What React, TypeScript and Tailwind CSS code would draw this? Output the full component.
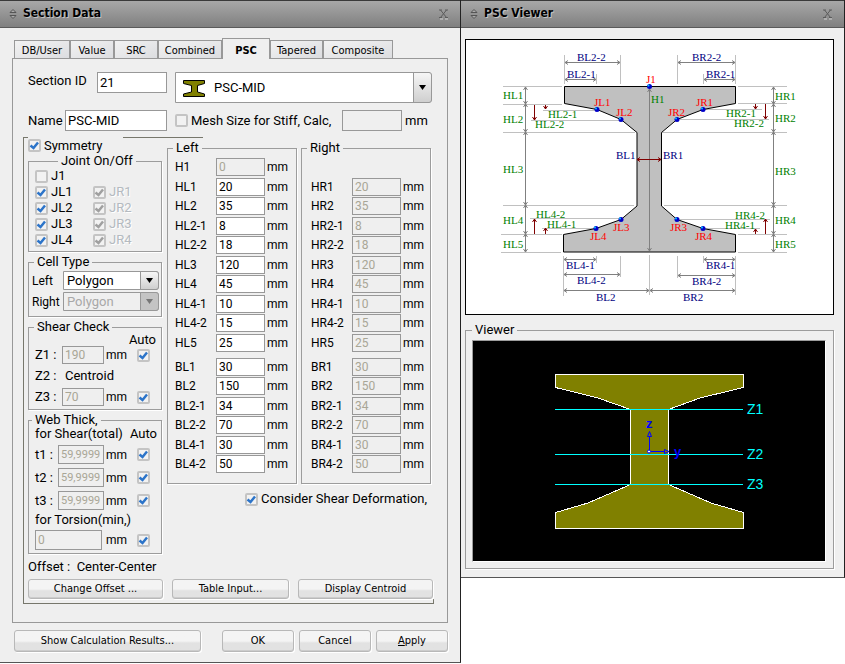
import React from 'react';

const SANS = 'font-[Roboto,sans-serif]';
const UI = "font-['DejaVu_Sans_Condensed','DejaVu_Sans',sans-serif]";

const tabs = [
  { name: 'DB/User', width: 'w-14' },
  { name: 'Value', width: 'w-11' },
  { name: 'SRC', width: 'w-11' },
  { name: 'Combined', width: 'w-16' },
  { name: 'PSC', width: 'w-12', active: true },
  { name: 'Tapered', width: 'w-[53px]' },
  { name: 'Composite', width: 'w-[70px]' },
];

const heights = [
  ['HL1', '20'],
  ['HL2', '35'],
  ['HL2-1', '8'],
  ['HL2-2', '18'],
  ['HL3', '120'],
  ['HL4', '45'],
  ['HL4-1', '10'],
  ['HL4-2', '15'],
  ['HL5', '25'],
];

const widths = [
  ['BL1', '30'],
  ['BL2', '150'],
  ['BL2-1', '34'],
  ['BL2-2', '70'],
  ['BL4-1', '30'],
  ['BL4-2', '50'],
];

const TitleBar: React.FC<{ title: string }> = ({ title }) => (
  <header className="flex h-7 items-center border-t border-b border-t-[#3a3a3a] border-b-[#5a5a5a] bg-linear-to-b from-[#a8a8a8] to-[#808080] pr-[10px] pl-2">
    <svg className="h-3 w-3" viewBox="0 0 12 12" fill="none" stroke="#555">
      <path d="M2 4.500 L5 1.500 L8 4.500 Z M2 7.500 L5 10.500 L8 7.500 Z" fill="#aaa" />
    </svg>
    <h1 className={`ml-[3px] flex-1 pb-[2px] text-[12px] leading-4 font-bold text-black [text-shadow:1px_1px_0_#c4c4c4] ${UI}`}>{title}</h1>
    <button aria-label={`Close ${title}`} className="h-3 w-3">
      <svg className="h-3 w-3" viewBox="0 0 12 12" fill="none">
        <path d="M2 11 H5 M7 11 H10" stroke="#d0d0d0" />
        <path d="M1 2 H4 M7 2 H10 M2.500 2 L8.500 9.500 M8.500 2 L2.500 9.500 M1 9.500 H4 M7 9.500 H10" stroke="#5c5c5c" />
      </svg>
    </button>
  </header>
);

interface CheckProps {
  id: string;
  label?: string;
  hint?: string;
  checked?: boolean;
  disabled?: boolean;
}

const Check: React.FC<CheckProps> = ({ id, label, hint, checked, disabled }) => (
  <span className="flex items-center gap-[3px]">
    <span className="relative h-[13px] w-[13px] shrink-0">
      <input
        id={id}
        type="checkbox"
        aria-label={label ? undefined : hint}
        defaultChecked={checked}
        disabled={disabled}
        className="peer block h-[13px] w-[13px] appearance-none rounded-[2px] border-2 border-[#c4c4c4] bg-[#f2f2f2]"
      />
      <svg
        className="pointer-events-none absolute inset-0 hidden h-[13px] w-[13px] text-[#2c74c9] peer-checked:block peer-disabled:text-[#a0a0a0]"
        viewBox="0 0 13 13"
        fill="none"
        stroke="currentColor"
        strokeWidth="2.500"
      >
        <path d="M2.500 6.500 L5.500 9 L10 3.500" />
      </svg>
    </span>
    {label && (
      <label htmlFor={id} className={`whitespace-nowrap ${disabled ? 'text-[#b4bac0] [text-shadow:1px_1px_0_#fff]' : ''}`}>
        {label}
      </label>
    )}
  </span>
);

interface FieldProps {
  id: string;
  value?: string;
  disabled?: boolean;
  className?: string;
}

const Field: React.FC<FieldProps> = ({ id, value = '', disabled, className = '' }) => (
  <input
    id={id}
    type="text"
    defaultValue={value}
    disabled={disabled}
    className={`min-w-0 border border-[#989898] bg-white px-[2px] text-black disabled:bg-[#efefef] disabled:text-[#a9a696] ${className}`}
  />
);

const Group: React.FC<{ title: string; legend?: string; className?: string; children: React.ReactNode }> = ({
  title,
  legend = 'ml-[5px]',
  className = '',
  children,
}) => (
  <fieldset className="min-w-0 border border-[#9c9c9c] shadow-[1px_1px_0_#fff]">
    <legend className={`h-[14px] px-[3px] leading-[14px] ${legend}`}>{title}</legend>
    <div className={className}>{children}</div>
  </fieldset>
);

const Arrow: React.FC<{ disabled?: boolean }> = ({ disabled }) => (
  <span
    className={`pointer-events-none absolute top-0 right-0 bottom-0 flex w-[19px] items-center justify-center rounded-r-[3px] border border-[#989898] ${
      disabled ? 'bg-[#c4c4c4]' : 'bg-linear-to-b from-[#f6f6f6] to-[#cfcfcf]'
    }`}
  >
    <svg className="h-[5px] w-[7px]" viewBox="0 0 7 5">
      <path d="M0 0 H7 L3.500 5 Z" fill={disabled ? '#777' : '#000'} />
    </svg>
  </span>
);

const CellSelect: React.FC<{ label: string; disabled?: boolean }> = ({ label, disabled }) => (
  <div className="flex items-center">
    <label htmlFor={`cell-${label}`} className="w-[31px] shrink-0 text-[12px] whitespace-nowrap">
      {label}
    </label>
    <div className="relative flex-1">
      <select
        id={`cell-${label}`}
        disabled={disabled}
        className="block h-[19px] w-full appearance-none rounded-r-[3px] border border-[#989898] bg-white px-[3px] leading-4 disabled:bg-[#efefef] disabled:text-[#a8a8a8] disabled:opacity-100"
      >
        <option>Polygon</option>
      </select>
      <Arrow disabled={disabled} />
    </div>
  </div>
);

const Dimension: React.FC<{ name: string; value: string; disabled?: boolean }> = ({ name, value, disabled }) => (
  <div className="flex h-[18px] items-center text-[12px]">
    <label htmlFor={name} className="w-[41px] shrink-0 whitespace-nowrap">
      {name}
    </label>
    <Field id={name} value={value} disabled={disabled} className="h-[18px] w-[49px]" />
    <span className="ml-[2px]">mm</span>
  </div>
);

const Dimensions: React.FC<{ side: 'L' | 'R' }> = ({ side }) => {
  const disabled = side === 'R';
  const rename = (name: string) => name.replace('L', side);
  return (
    <>
      <div className="*:even:mt-px *:odd:mt-[2px]">
        {heights.map(([name, value]) => (
          <Dimension key={name} name={rename(name)} value={value} disabled={disabled} />
        ))}
      </div>
      <div className="pt-1 *:even:mt-px *:odd:mt-[2px]">
        {widths.map(([name, value]) => (
          <Dimension key={name} name={rename(name)} value={value} disabled={disabled} />
        ))}
      </div>
    </>
  );
};

const AutoField: React.FC<{ name: string; value: string; className: string }> = ({ name, value, className }) => (
  <div className="flex items-center">
    <label htmlFor={name} className="flex-1 whitespace-nowrap">
      {name} :
    </label>
    <Field id={name} value={value} disabled className={className} />
    <span className="ml-[2px] w-[31px] text-[12px]">mm</span>
    <Check id={`${name}-auto`} hint={`${name} auto`} checked />
  </div>
);

const PushButton: React.FC<{ className?: string; children: React.ReactNode }> = ({ className = '', children }) => (
  <button
    className={`rounded-[3px] border border-[#b8b8b8] bg-linear-to-b from-[#f4f4f4] from-50% to-[#e2e2e2] to-60% text-center text-[11px] leading-4 whitespace-nowrap text-black shadow-[inset_0_-1px_0_#ccc,1px_1px_0_#fff] ${UI} ${className}`}
  >
    {children}
  </button>
);

// Line with an open arrow head at its end, or at both ends
const Dim: React.FC<{ x1: number; y1: number; x2: number; y2: number; color?: string; both?: boolean }> = ({
  x1,
  y1,
  x2,
  y2,
  color = '#808080',
  both = true,
}) => {
  const head = (x: number, y: number, fromX: number, fromY: number) => {
    const dx = Math.sign(fromX - x) * 3;
    const dy = Math.sign(fromY - y) * 3;
    return dx
      ? `M${x + dx} ${y - 2} L${x} ${y} L${x + dx} ${y + 2}`
      : `M${x - 2} ${y + dy} L${x} ${y} L${x + 2} ${y + dy}`;
  };
  return (
    <path
      d={`M${x1} ${y1} L${x2} ${y2} ${head(x2, y2, x1, y1)} ${both ? head(x1, y1, x2, y2) : ''}`}
      stroke={color}
      fill="none"
    />
  );
};

const guides = [
  'M503 86.500H562 M738 86.500H787 M503 104.500H562 M738 103.500H787',
  'M503 132.500H635 M662 132.500H787 M503 205.500H634 M664 205.500H787',
  'M501 234.500H562 M738 234.500H787 M501 252.500H561 M738 252.500H787',
  'M543 110.500H595 M531 120.500H619 M705 109.500H762 M680 119.500H769',
  'M530 218.500H619 M542 228.500H594 M680 219.500H770 M706 228.500H760',
  'M564.500 55V84 M620.500 55V84 M596.500 74V84 M677.500 55V84 M735.500 55V84 M703.500 74V84',
  'M563.500 256V296 M596.500 256V263 M620.500 256V277 M649.500 255V295 M677.500 256V278 M703.500 256V263 M735.500 256V295',
].join(' ');

const verticalStops = [87, 104, 132, 205, 234, 252];

const horizontalDims = [
  [565, 620, 62.5],
  [565, 596, 79.5],
  [678, 735, 62.5],
  [704, 735, 79.5],
  [564, 596, 259.5],
  [564, 620, 274.5],
  [564, 649, 290.5],
  [650, 735, 290.5],
  [678, 735, 275.5],
  [704, 735, 259.5],
];

const offsets = [
  [534.5, 105, 120],
  [545.5, 105, 109],
  [755.5, 104, 109],
  [765.5, 104, 119],
  [534.5, 234, 219],
  [545.5, 234, 228],
  [755.5, 234, 229],
  [765.5, 234, 219],
];

const joints = [
  [649.5, 86.5],
  [597, 109.5],
  [621, 119.5],
  [703, 109.5],
  [677, 119.5],
  [621, 219.5],
  [596, 228.5],
  [677, 219.5],
  [703, 228.5],
];

const blueLabels: [string, number, number][] = [
  ['BL2-2', 577, 61],
  ['BL2-1', 567, 78],
  ['BR2-2', 692, 61],
  ['BR2-1', 706, 78],
  ['BL1', 616, 159],
  ['BR1', 663, 159],
  ['BL4-1', 566, 269],
  ['BL4-2', 577, 284],
  ['BL2', 596, 301],
  ['BR2', 683, 301],
  ['BR4-2', 692, 285],
  ['BR4-1', 706, 269],
];

const greenLabels: [string, number, number][] = [
  ['H1', 651, 103],
  ['HL1', 503, 99],
  ['HL2', 503, 123],
  ['HL2-1', 548, 118],
  ['HL2-2', 535, 128],
  ['HL3', 503, 173],
  ['HL4-2', 536, 218],
  ['HL4-1', 547, 228],
  ['HL4', 503, 224],
  ['HL5', 503, 248],
  ['HR1', 775, 100],
  ['HR2', 775, 122],
  ['HR2-1', 726, 117],
  ['HR2-2', 734, 127],
  ['HR3', 775, 175],
  ['HR4-2', 735, 219],
  ['HR4-1', 725, 229],
  ['HR4', 775, 224],
  ['HR5', 775, 248],
];

const redLabels: [string, number, number][] = [
  ['J1', 646, 83],
  ['JL1', 594, 106],
  ['JL2', 616, 116],
  ['JR1', 696, 106],
  ['JR2', 668, 116],
  ['JL3', 613, 231],
  ['JL4', 590, 240],
  ['JR3', 670, 231],
  ['JR4', 695, 240],
];

const Labels: React.FC<{ items: [string, number, number][]; fill: string }> = ({ items, fill }) => (
  <g fill={fill}>
    {items.map(([text, x, y]) => (
      <text key={text} x={x} y={y}>
        {text}
      </text>
    ))}
  </g>
);

const SectionDiagram: React.FC = () => (
  <svg className="block w-full font-['Liberation_Serif',serif] text-[11px]" viewBox="466 40 367 274">
    <path d={guides} stroke="#c0c0c0" />
    <path
      d="M564.500 86.500 H735.500 V103.500 L703 109.500 L677 119.500 L661.500 132.500 V206 L677 219.500 L703 228.500 L735.500 234.500 V252 H563.500 V234.500 L596 228.500 L621 219.500 L637 206 V132.500 L621 119.500 L597 109.500 L564.500 103.500 Z"
      fill="#c0c0c0"
      stroke="#000"
    />
    <Dim x1={649.5} y1={89} x2={649.5} y2={251} />
    {[525.5, 773.5].map((x) =>
      verticalStops.slice(1).map((y, i) => <Dim key={`${x}-${y}`} x1={x} y1={verticalStops[i]} x2={x} y2={y} />),
    )}
    {horizontalDims.map(([x1, x2, y]) => (
      <Dim key={`${x1}-${x2}-${y}`} x1={x1} y1={y} x2={x2} y2={y} />
    ))}
    {offsets.map(([x, y1, y2]) => (
      <Dim key={`${x}-${y2}`} x1={x} y1={y1} x2={x} y2={y2} color="#800000" both={false} />
    ))}
    <Dim x1={637} y1={159.5} x2={661} y2={159.5} color="#800000" />
    {joints.map(([x, y]) => (
      <g key={`${x}-${y}`}>
        <circle cx={x} cy={y} r="2.500" fill="#0000c8" />
        <circle cx={x - 1} cy={y - 1} r="1" fill="#00c8ff" />
      </g>
    ))}
    <Labels items={blueLabels} fill="#000080" />
    <Labels items={greenLabels} fill="#008000" />
    <Labels items={redLabels} fill="#ff0000" />
  </svg>
);

const SectionModel: React.FC = () => (
  <svg className="block w-full bg-black font-['Liberation_Sans',sans-serif]" viewBox="473 341 352 220">
    <path
      d="M555.500 374.500 H743.500 V387.500 L700 398 L668.500 409.500 V484.500 L711 503 L743.500 512.500 V528.500 H555.500 V512.500 L588 503 L630.500 484.500 V409.500 L598 398 L555.500 387.500 Z"
      fill="#808000"
      stroke="#fff"
      shapeRendering="crispEdges"
    />
    <path d="M555 409.500 H743 M555 454.500 H743 M555 484.500 H743" stroke="#00ffff" shapeRendering="crispEdges" />
    <g fill="#00ffff" className="text-[14px]">
      <text x="747" y="414">Z1</text>
      <text x="747" y="459">Z2</text>
      <text x="747" y="489">Z3</text>
    </g>
    <g stroke="#0000ff" fill="none">
      <path d="M649.500 450 V437 M651 451.500 H664" />
      <path d="M647.500 436.500 L649.500 431.500 L651.500 436.500 Z M664.500 449.500 L669 451.500 L664.500 453.500 Z" />
      <circle cx="649" cy="451.500" r="1.500" fill="#fff" />
    </g>
    <g fill="#0000ff" className="text-[13px] font-bold">
      <text x="646" y="428">z</text>
      <text x="674" y="456">y</text>
    </g>
  </svg>
);

const App: React.FC = () => (
  <div className="grid grid-cols-[minmax(0,461fr)_minmax(0,384fr)] items-start bg-white">
    <section className={`border-r border-b border-r-[#222] border-b-[#555] bg-[#efefef] pb-[10px] text-[13px] leading-[14px] text-black ${SANS}`}>
      <TitleBar title="Section Data" />

      <main className="px-3 pt-[10px]">
        <nav className={`relative flex items-end pl-[2px] text-[11px] ${UI}`} role="tablist">
          {tabs.map(({ name, width, active }) => (
            <button
              key={name}
              role="tab"
              aria-selected={!!active}
              className={
                active
                  ? `relative -mb-px h-[21px] border border-b-0 border-[#989898] bg-[#efefef] pt-1 font-bold ${width}`
                  : `h-[18px] border border-b-0 border-[#989898] bg-linear-to-br from-[#f2f2f2] to-[#dcdde0] pt-[2px] ${width}`
              }
            >
              {name}
            </button>
          ))}
        </nav>

        <div className="border border-[#989898] pt-[13px] pr-[13px] pb-[18px] pl-[10px]">
          <div className="flex items-start pl-[5px]">
            <div className="w-[139px] shrink-0">
              <div className="flex items-start justify-between">
                <label htmlFor="section-id" className="pt-[2px] whitespace-nowrap">Section ID</label>
                <Field id="section-id" value="21" className="h-[21px] w-[70px]" />
              </div>
              <div className="mt-[17px] flex items-center justify-between">
                <label htmlFor="name">Name</label>
                <Field id="name" value="PSC-MID" className="h-[21px] w-[102px]" />
              </div>
            </div>
            <div className="ml-2 flex-1">
              <div className="relative mr-[2px]">
                <select
                  aria-label="Section type"
                  className="block h-[31px] w-full appearance-none rounded-r-[4px] border border-[#989898] bg-white pl-[38px]"
                >
                  <option>PSC-MID</option>
                </select>
                <svg className="pointer-events-none absolute top-2 left-2 h-[18px] w-[22px]" viewBox="0 0 22 18">
                  <path
                    d="M0.500 0.500 H21.500 V3.500 L14.500 5.500 V12 L21.500 14 V16.500 H0.500 V14 L8.500 12 V5.500 L0.500 3.500 Z"
                    fill="#808000"
                    stroke="#000"
                  />
                </svg>
                <Arrow />
              </div>
              <div className="mt-[7px] flex h-[21px] items-center whitespace-nowrap">
                <Check id="mesh" label="Mesh Size for Stiff, Calc," />
                <Field id="mesh-size" disabled className="ml-auto h-[21px] w-[60px]" />
                <span className="ml-[3px] w-[29px]">mm</span>
              </div>
            </div>
          </div>

          <div className="mt-[6px] border-l border-[#77776c]">
            <div className="flex h-px">
              <span className="w-1 bg-[#77776c]" />
              <span className="ml-[95px] w-20 bg-[#77776c]" />
            </div>
            <div className="grid grid-cols-[minmax(0,134fr)_minmax(0,264fr)] gap-[5px] pr-[3px] pl-1">
              <div className="flex flex-col gap-[3px]">
                <div className="flex h-[13px] items-center pt-[2px]">
                  <Check id="symmetry" label="Symmetry" checked />
                </div>

                <Group title="Joint On/Off" legend="ml-[29px]" className="pb-[3px] pl-[6px]">
                  <div className="grid grid-cols-[58px_1fr]">
                    <div className="*:h-4">
                      <Check id="j1" label="J1" />
                      <Check id="jl1" label="JL1" checked />
                      <Check id="jl2" label="JL2" checked />
                      <Check id="jl3" label="JL3" checked />
                      <Check id="jl4" label="JL4" checked />
                    </div>
                    <div className="pt-4 *:h-4">
                      <Check id="jr1" label="JR1" checked disabled />
                      <Check id="jr2" label="JR2" checked disabled />
                      <Check id="jr3" label="JR3" checked disabled />
                      <Check id="jr4" label="JR4" checked disabled />
                    </div>
                  </div>
                </Group>

                <Group title="Cell Type" className="pt-[2px] pr-[2px] pb-[5px] pl-[3px]">
                  <div className="flex flex-col gap-[2px]">
                    <CellSelect label="Left" />
                    <CellSelect label="Right" disabled />
                  </div>
                </Group>

                <Group title="Shear Check" className="pr-[11px] pb-[3px] pl-[6px]">
                  <div className="-mr-[6px] h-3 text-right leading-3">Auto</div>
                  <div className="flex flex-col gap-[3px]">
                    <AutoField name="Z1" value="190" className="h-[18px] w-[42px] text-[12px]" />
                    <div className="flex h-[18px] items-center">
                      <span className="w-[30px]">Z2 :</span>
                      <span>Centroid</span>
                    </div>
                    <AutoField name="Z3" value="70" className="h-[18px] w-[42px] text-[12px]" />
                  </div>
                </Group>

                <Group title="Web Thick," legend="ml-[3px]" className="pr-[11px] pb-[3px] pl-[6px]">
                  <div className="-mr-[7px] flex justify-between pb-1 whitespace-nowrap">
                    <span>for Shear(total)</span>
                    <span>Auto</span>
                  </div>
                  <div className="flex flex-col gap-1">
                    <AutoField name="t1" value="59,9999" className="h-[19px] w-[46px] text-[11px]" />
                    <AutoField name="t2" value="59,9999" className="h-[19px] w-[46px] text-[11px]" />
                    <AutoField name="t3" value="59,9999" className="h-[19px] w-[46px] text-[11px]" />
                  </div>
                  <label htmlFor="torsion" className="block py-[3px]">for Torsion(min,)</label>
                  <div className="flex items-center">
                    <Field id="torsion" value="0" disabled className="h-5 w-[67px] text-[12px]" />
                    <span className="flex-1 pl-1 text-[12px]">mm</span>
                    <Check id="torsion-auto" hint="Torsion auto" checked />
                  </div>
                </Group>
              </div>

              <div className="pt-[3px]">
                <div className="grid grid-cols-2 gap-1">
                  <Group title="Left" className="pt-[3px] pb-[10px] pl-[7px]">
                    <Dimension name="H1" value="0" disabled />
                    <Dimensions side="L" />
                  </Group>
                  <Group title="Right" className="pt-[21px] pb-[10px] pl-[9px]">
                    <Dimensions side="R" />
                  </Group>
                </div>
                <div className="mt-2 pl-[78px]">
                  <Check id="shear" label="Consider Shear Deformation," checked />
                </div>
              </div>
            </div>

            <p className="mt-[6px] pl-1 whitespace-pre">Offset :  Center-Center</p>
            <div className="mt-[5px] grid grid-cols-[135fr_117fr_135fr] gap-[9px] pr-[1px] pl-1">
              <PushButton className="h-5">Change Offset ...</PushButton>
              <PushButton className="h-5">Table Input...</PushButton>
              <PushButton className="h-5">Display Centroid</PushButton>
            </div>
            <div className="h-[5px] border-r border-b border-[#77776c]" />
          </div>
        </div>

        <footer className="mt-[7px] flex gap-[5px] pl-[2px]">
          <PushButton className="mr-4 h-[22px] flex-[190]">Show Calculation Results...</PushButton>
          <PushButton className="h-[22px] flex-[72]">OK</PushButton>
          <PushButton className="h-[22px] flex-[72]">Cancel</PushButton>
          <PushButton className="h-[22px] flex-[72]">
            <span className="underline">A</span>pply
          </PushButton>
        </footer>
      </main>
    </section>

    <section className={`border-r border-b border-r-[#222] border-b-[#555] bg-[#efefef] pb-2 text-[13px] leading-[14px] text-black ${SANS}`}>
      <TitleBar title="PSC Viewer" />
      <main className="flex flex-col gap-2 pt-[11px] pr-[10px] pl-1">
        <div className="border border-black bg-white">
          <SectionDiagram />
        </div>
        <Group title="Viewer" legend="ml-[6px]" className="pt-[3px] pr-[7px] pb-[6px] pl-[6px]">
          <div className="border border-t-[#9c9c9c] border-r-white border-b-white border-l-[#9c9c9c]">
            <SectionModel />
          </div>
        </Group>
      </main>
    </section>
  </div>
);

export default App;
